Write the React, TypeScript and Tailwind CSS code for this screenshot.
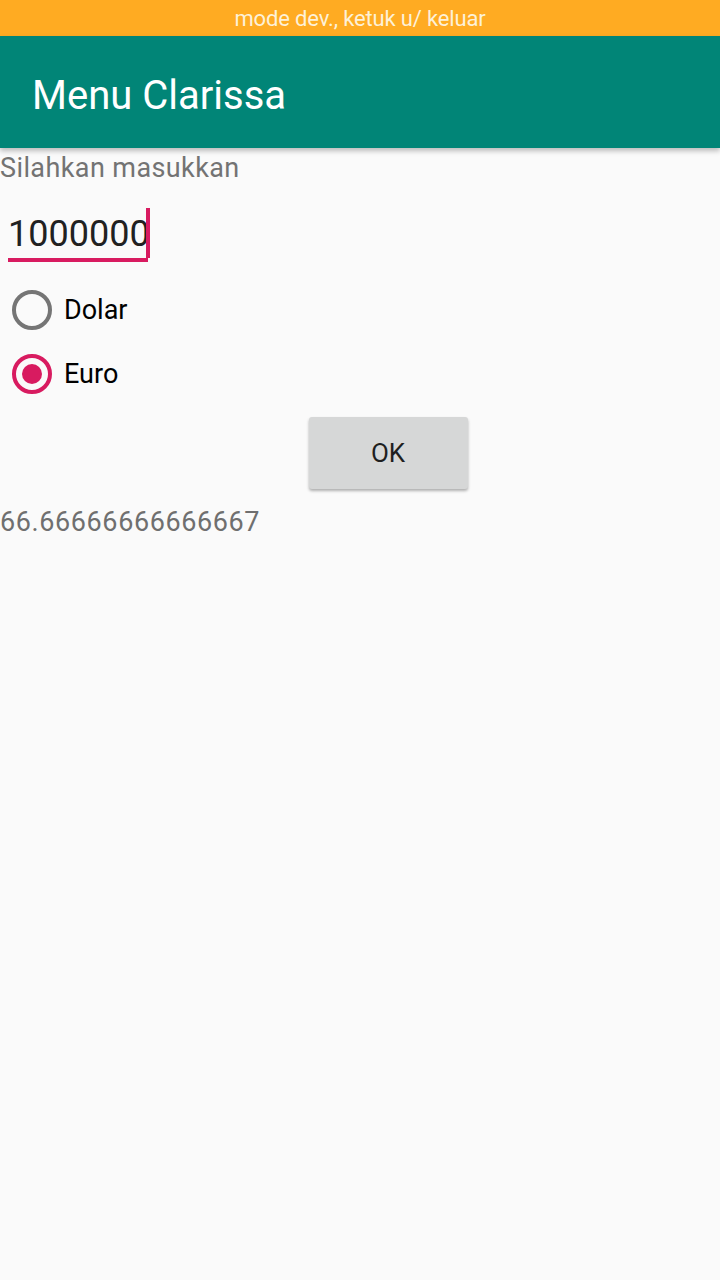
import React, { useState } from 'react';

const App: React.FC = () => {
    const [currency, setCurrency] = useState<'dolar' | 'euro'>('euro');
    const [amount, setAmount] = useState('1000000');

    return (
        <div className="min-h-[1280px] w-[720px] bg-[#fafafa] font-['Roboto',sans-serif]">
            {/* status bar */}
            <div className="h-9 bg-[#ffab22] flex items-center justify-center">
                <span className="text-[22px] text-[#fdf1d8] tracking-[-0.15px]">mode dev., ketuk u/ keluar</span>
            </div>

            {/* app bar */}
            <div className="h-28 bg-[#018577] flex items-center px-8 pt-2 shadow-[0_3px_5px_rgba(0,0,0,0.25)] relative z-10">
                <h1 className="text-[40px] text-white">Menu Clarissa</h1>
            </div>

            <div className="pt-1">
                <p className="text-[27px] text-[#737373] leading-8 tracking-[0.4px]">Silahkan masukkan</p>

                <div className="mt-[26px] ml-2 w-[140px] border-b-4 border-[#d81b60] flex items-end h-[52px]">
                    <span className="text-[36px] text-[#212121] leading-none mb-[6px]">{amount}</span>
                    <span className="w-1 h-[50px] bg-[#d81b60] -ml-1 shrink-0"></span>
                </div>

                <div className="mt-[28px] ml-3 space-y-[24px]">
                    {(['dolar', 'euro'] as const).map(c => (
                        <div key={c} className="flex items-center h-10 cursor-pointer" onClick={() => setCurrency(c)}>
                            <div className={`w-10 h-10 rounded-full border-4 flex items-center justify-center ${currency === c ? 'border-[#d81b60]' : 'border-[#757575]'}`}>
                                {currency === c && <div className="w-5 h-5 rounded-full bg-[#d81b60]"></div>}
                            </div>
                            <span className="ml-3 text-[27px] text-black">{c === 'dolar' ? 'Dolar' : 'Euro'}</span>
                        </div>
                    ))}
                </div>

                <div className="flex justify-center mt-[23px]">
                    <button onClick={() => setAmount(amount)} className="w-[159px] h-[72px] bg-[#d6d7d7] rounded-[3px] shadow-[0_2px_3px_rgba(0,0,0,0.3)] text-[26px] text-[#1f1f1f] ml-[56px]">
                        OK
                    </button>
                </div>

                <p className="mt-[17px] text-[27px] text-[#6f6f6f] leading-8 tracking-[0.6px]">66.66666666666667</p>
            </div>
        </div>
    );
};

export default App;
